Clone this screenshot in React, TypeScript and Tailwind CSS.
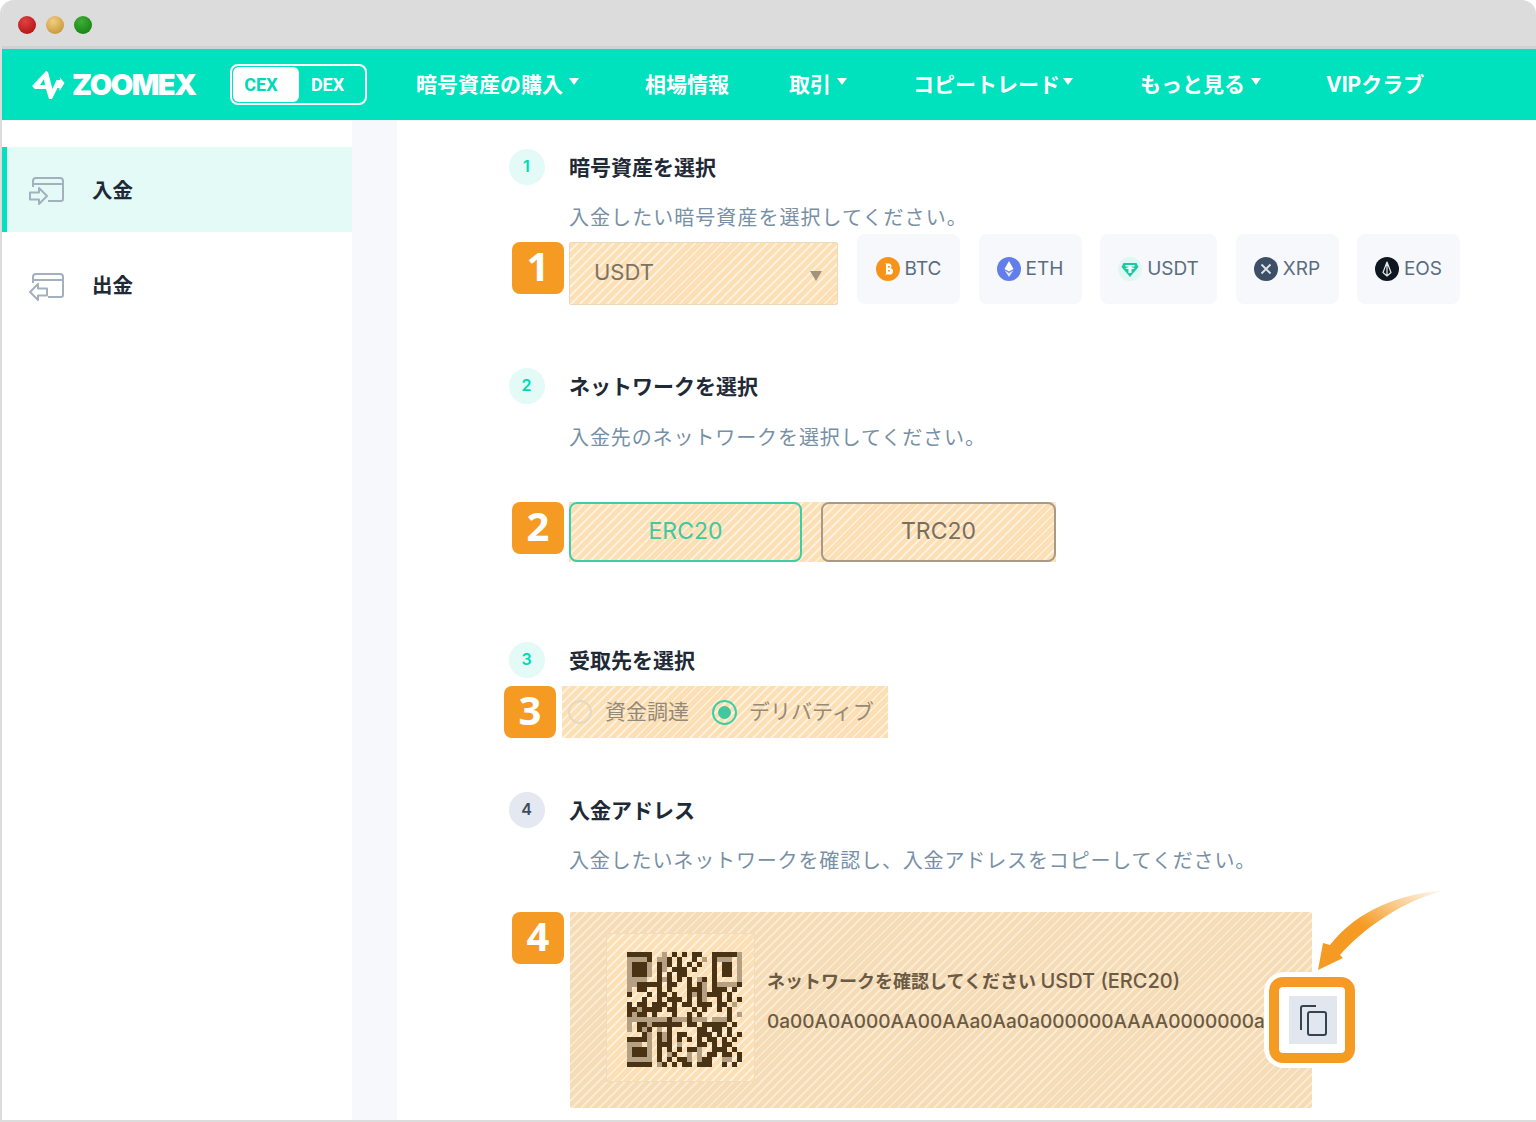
const jp = "font-['Inter','Noto_Sans_CJK_JP',sans-serif]";

const qrRows = [
  "#####..+.#.#.##..#####+",
  "++++#.++#.#..#.+.#+++.+",
  "+###+.#+#.#.#.#..#.##.+",
  "+###+.#+.###.#...#.##.+",
  "+###+.#.#.##.....#.##.+",
  "++++..#+#.#.#.+#.#....+",
  "++#####.##..#.#+.#++++#",
  "+.##..#.#...###+.###.#.",
  "#...#.##.#..#+#+###.#..",
  "...#..#.###.#.#+..#.#.#",
  "#.##.###.#.##.###.##.+.",
  "##+####.##...#.#..#.#..",
  "#+##.#...#..#.#.....#.+",
  "++++++++#+++#+++.+++#..",
  "+.##+######.##.#####.#.",
  "+.#+#.+.#.....##.##.#..",
  "...#+.#+#.##..###.#.#.#",
  "####+.#+#.#.#.#.##.#.#.",
  "+++.+.###.+...##.#.##..",
  "+###+.#.#.#.##+..###.#.",
  "+###+.#.+#..+.+.##.##.#",
  "+++++.#.#.##+.+##..++.#",
  "#####.+#.#.##.###..#.#.",
];

function Qr() {
  return (
    <svg width="115" height="115" viewBox="0 0 23 23" shapeRendering="crispEdges">
      {qrRows.map((row, y) =>
        row.split("").map((c, x) =>
          c === "." ? null : (
            <rect key={`${x}-${y}`} x={x} y={y} width="1" height="1" fill={c === "#" ? "#4a3215" : "#b5a083"} />
          )
        )
      )}
    </svg>
  );
}

function CardIcon({ out }: { out?: boolean }) {
  return (
    <svg width="36" height="30" viewBox="0 0 36 30" fill="none" stroke="#a3b1bf" strokeWidth="2">
      <path d="M4 11V5a3 3 0 0 1 3-3h24a3 3 0 0 1 3 3v18a2 2 0 0 1-2 2H19" />
      <path d="M4 8h30" />
      {out ? (
        <path d="M1 20 9 12v4.500h9v7H9V28Z" strokeLinejoin="round" />
      ) : (
        <path d="M18 20 10 12v4.500H1v7h9V28Z" strokeLinejoin="round" />
      )}
    </svg>
  );
}

function Caret({ className }: { className?: string }) {
  return <span className={`${className ?? "ml-[6px]"} mb-[6px] w-0 h-0 border-x-[5px] border-x-transparent border-t-[7px] border-t-white`} />;
}

function Step({ n, title, active = true }: { n: number; title: string; active?: boolean }) {
  return (
    <div className="flex items-center gap-[24px] h-[36px]">
      <div
        className={
          active
            ? "w-[36px] h-[36px] rounded-full bg-[#e3faf7] text-[#00d9b5] flex items-center justify-center pb-[2px] pr-[1px] text-[16px] font-semibold"
            : "w-[36px] h-[36px] rounded-full bg-[#e4e8f0] text-[#3d4d5f] flex items-center justify-center pb-[2px] pr-[1px] text-[16px] font-semibold"
        }
      >
        {n}
      </div>
      <div className="mt-[2px] text-[21px] font-bold text-[#1f2a37] leading-[36px]">{title}</div>
    </div>
  );
}

function Badge({ n }: { n: number }) {
  return (
    <div className="w-[52px] h-[52px] shrink-0 rounded-[8px] bg-[#f59b23] text-white flex items-center justify-center pb-[4px] text-[40px] font-bold font-['Open_Sans',sans-serif] leading-none">
      {n}
    </div>
  );
}

function Coin({ name }: { name: string }) {
  if (name === "BTC")
    return (
      <svg width="24" height="24" viewBox="0 0 24 24">
        <circle cx="12" cy="12" r="12" fill="#f7931a" />
        <path d="M9 6.500h4a2.500 2.500 0 0 1 1.200 4.700A2.800 2.800 0 0 1 13.500 17.500H9l1-1V7.500Z" fill="#fff" />
        <rect x="12" y="9" width="1.800" height="1.500" fill="#f7931a" />
        <rect x="12" y="13" width="1.800" height="1.500" fill="#f7931a" />
      </svg>
    );
  if (name === "ETH")
    return (
      <svg width="24" height="24" viewBox="0 0 24 24">
        <circle cx="12" cy="12" r="12" fill="#627eea" />
        <path d="M12 4 7.500 12 12 14.500 16.500 12Z" fill="#fff" />
        <path d="M7.500 13.300 12 20 16.500 13.300 12 16Z" fill="#dfe5fb" />
      </svg>
    );
  if (name === "USDT")
    return (
      <svg width="24" height="24" viewBox="0 0 24 24">
        <circle cx="12" cy="12" r="12" fill="#e0f7f2" />
        <path d="M5.500 6h13l2 4L12 20 3.500 10Z" fill="#1cc8a3" />
        <path d="M7.500 8h9v1.500h-3v1c1.500.1 3 .4 3 .8s-1.500.7-3 .8V16h-3v-3.900c-1.500-.1-3-.4-3-.8s1.500-.7 3-.8v-1h-3Z" fill="#fff" />
      </svg>
    );
  if (name === "XRP")
    return (
      <svg width="24" height="24" viewBox="0 0 24 24">
        <circle cx="12" cy="12" r="12" fill="#3d4f66" />
        <path d="M7.500 7.500 16.500 16.500M16.500 7.500 7.500 16.500" stroke="#dfe5ec" strokeWidth="1.800" fill="none" />
      </svg>
    );
  return (
    <svg width="24" height="24" viewBox="0 0 24 24">
      <circle cx="12" cy="12" r="12" fill="#0f1720" />
      <path d="M12 5 8 15.500 12 19l4-3.500ZM12 5v14" stroke="#e5e9ee" strokeWidth="1.200" fill="none" strokeLinejoin="round" />
    </svg>
  );
}

function Chip({ name, w }: { name: string; w: string }) {
  return (
    <div className={`${w} h-[70px] rounded-[8px] bg-[#f6f8fb] flex items-center justify-center gap-[5px] text-[19px] text-[#5a6d80]`}>
      <Coin name={name} />
      {name}
    </div>
  );
}

const hatch =
  "bg-[repeating-linear-gradient(135deg,#fddfb6_0px,#fddfb6_4.500px,#fff0dc_4.500px,#fff0dc_6.400px)]";
const hatchDim =
  "bg-[repeating-linear-gradient(135deg,#f5dcb6_0px,#f5dcb6_4.500px,#faead2_4.500px,#faead2_6.400px)]";

export default function App() {
  return (
    <div className={`w-[1536px] h-[1122px] bg-white overflow-hidden ${jp}`}>
      <div className="h-full rounded-t-[14px] border-l-2 border-b-2 border-[#dcdcdc] flex flex-col overflow-hidden">
        <div className="h-[49px] shrink-0 bg-[#dcdcdc] border-b-[3px] border-[#cdd2d2] flex items-center gap-[10px] pl-[18px] pt-[4px] -ml-[2px]">
          <div className="w-[18px] h-[18px] rounded-full bg-[radial-gradient(circle_at_40%_30%,#e04040,#a80c0c)]" />
          <div className="w-[18px] h-[18px] rounded-full bg-[radial-gradient(circle_at_40%_30%,#f3cd7f,#bd8b2a)]" />
          <div className="w-[18px] h-[18px] rounded-full bg-[radial-gradient(circle_at_40%_30%,#3fae35,#0d7a0d)]" />
        </div>

        <header className="h-[71px] shrink-0 bg-[#00e1be] flex items-center pl-[30px] text-white">
          <svg width="33" height="30" viewBox="0 0 33 30" fill="#fff" className="shrink-0">
            <path fillRule="evenodd" d="M0 16 14 1l2 1 4.500 17 4-9h4l-1-3 5 6-5 8v-3h-2L20 29h-3L14 19H3ZM8 15h5l-1-6Z" />
          </svg>
          <div className="ml-[7px] w-[124px] text-[29px] leading-none font-black font-['Inter',sans-serif] tracking-[-1.500px]">ZOOMEX</div>
          <div className="ml-[34px] w-[137px] h-[41px] rounded-[8px] border-2 border-white flex items-center p-[1px] font-['Roboto',sans-serif] font-bold text-[18px]">
            <div className="w-[66px] h-[35px] rounded-[6px] bg-white text-[#00d9b5] flex items-center justify-center pr-[10px]">CEX</div>
            <div className="flex-1 text-center pr-[8px]">DEX</div>
          </div>
          <nav className="ml-[49px] flex items-center text-[21px] font-bold whitespace-nowrap">
            <span>暗号資産の購入</span>
            <Caret />
            <span className="ml-[66px]">相場情報</span>
            <span className="ml-[60px]">取引</span>
            <Caret />
            <span className="ml-[66px]">コピートレード</span>
            <Caret className="ml-[3px]" />
            <span className="ml-[67px]">もっと見る</span>
            <Caret />
            <span className="ml-[65px]">VIPクラブ</span>
          </nav>
        </header>

        <div className="flex-1 flex min-h-0">
          <aside className="w-[350px] shrink-0 pt-[27px]">
            <div className="h-[85px] bg-[#e3faf7] border-l-[5px] border-[#00e1be] flex items-center pl-[22px] gap-[27px] pt-[3px] text-[20.500px] font-semibold text-[#1f2a37]">
              <CardIcon />
              入金
            </div>
            <div className="mt-[12px] h-[85px] flex items-center pl-[27px] gap-[27px] text-[20.500px] font-semibold text-[#1f2a37]">
              <CardIcon out />
              出金
            </div>
          </aside>
          <div className="w-[45px] shrink-0 bg-[#f6f8fc]" />

          <main className="flex-1 pl-[112px] pt-[29px] relative">
            <Step n={1} title="暗号資産を選択" />
            <p className="mt-[19px] ml-[60px] text-[20px] leading-[28px] tracking-[1.050px] text-[#7790a5]">入金したい暗号資産を選択してください。</p>
            <div className="mt-[2px] ml-[3px] flex items-start">
              <div className="mt-[8px]"><Badge n={1} /></div>
              <div className={`mt-[8px] ml-[5px] w-[269px] h-[63px] border border-[#ecd9bb] rounded-[2px] ${hatch} flex items-center justify-between pl-[24px] pr-[15px] pb-[2px] text-[22px] text-[#7c7462]`}>
                USDT
                <span className="w-0 h-0 border-x-[6px] border-x-transparent border-t-[10px] border-t-[#a2947c] mt-[6px]" />
              </div>
              <div className="ml-[19px] flex gap-[18.500px]">
                <Chip name="BTC" w="w-[103px]" />
                <Chip name="ETH" w="w-[103px]" />
                <Chip name="USDT" w="w-[117px]" />
                <Chip name="XRP" w="w-[103px]" />
                <Chip name="EOS" w="w-[103px]" />
              </div>
            </div>

            <div className="mt-[63px]"><Step n={2} title="ネットワークを選択" /></div>
            <p className="mt-[20px] ml-[60px] text-[20px] leading-[28px] tracking-[0.900px] text-[#7790a5]">入金先のネットワークを選択してください。</p>
            <div className="mt-[50px] ml-[3px] flex items-start">
              <Badge n={2} />
              <div className={`ml-[5px] w-[487px] h-[60px] flex justify-between ${hatch} text-[23px]`}>
                <div className="w-[233px] rounded-[8px] border-2 border-[#3ccfa6] text-[#43c79f] flex items-center justify-center pb-[2px]">ERC20</div>
                <div className="w-[235px] rounded-[8px] border-2 border-[#a89a86] text-[#7a6f5e] flex items-center justify-center pb-[2px]">TRC20</div>
              </div>
            </div>

            <div className="mt-[80px]"><Step n={3} title="受取先を選択" /></div>
            <div className="mt-[8px] -ml-[5px] flex items-start">
              <Badge n={3} />
              <div className={`ml-[6px] w-[326px] h-[52px] ${hatch} flex items-center pl-[6px] text-[21px] text-[#948a78]`}>
                <span className="w-[24px] h-[24px] rounded-full border-2 border-[#e7d8bf]" />
                <span className="ml-[13px]">資金調達</span>
                <span className="ml-[23px] w-[25px] h-[25px] rounded-full border-2 border-[#3ccfa6] flex items-center justify-center">
                  <span className="w-[13px] h-[13px] rounded-full bg-[#43c79f]" />
                </span>
                <span className="ml-[12px]">デリバティブ</span>
              </div>
            </div>

            <div className="mt-[54px]"><Step n={4} title="入金アドレス" active={false} /></div>
            <p className="mt-[19px] ml-[60px] text-[20px] leading-[28px] tracking-[0.860px] text-[#7790a5]">入金したいネットワークを確認し、入金アドレスをコピーしてください。</p>
            <div className="mt-[37px] ml-[3px] flex items-start">
              <Badge n={4} />
              <div className={`ml-[6px] w-[742px] h-[196px] rounded-[2px] ${hatchDim} flex items-start pt-[21px] pl-[36px]`}>
                <div className={`w-[149px] h-[149px] shrink-0 border border-[#efdcbc] ${hatch} flex items-center justify-center pl-[8px] pt-[4px]`}>
                  <Qr />
                </div>
                <div className="ml-[12px] mt-[36px] whitespace-nowrap text-[#6b5a44]">
                  <div className="text-[18px] font-semibold leading-[24px]">
                    ネットワークを確認してください <span className="text-[20px] font-medium">USDT (ERC20)</span>
                  </div>
                  <div className="mt-[16px] text-[19px] font-medium leading-[24px] font-['Inter',sans-serif]">0a00A0A000AA00AAa0Aa0a000000AAAA0000000a</div>
                </div>
              </div>
            </div>

            {/* copy button sits on top of the hatched box */}
            <div className="absolute left-[867px] top-[852px] w-[96px] h-[96px] rounded-[20px] bg-white p-[5px]">
              <div className="w-full h-full rounded-[14px] border-[10px] border-[#f59b23] bg-white flex items-center justify-center">
                <div className="ml-[2px] w-[48px] h-[48px] bg-[#e2e6ef] flex items-center justify-center">
                  <svg width="28" height="32" viewBox="0 0 28 32" fill="none" stroke="#36424f" strokeWidth="2">
                    <rect x="9" y="8" width="18" height="23" rx="2" />
                    <path d="M17 2H4a2 2 0 0 0-2 2v22" />
                  </svg>
                </div>
              </div>
            </div>

            <svg className="absolute left-[915px] top-[765px]" width="140" height="90" viewBox="0 0 140 90">
              <defs>
                <linearGradient id="arrowFade" x1="0" y1="1" x2="1" y2="0">
                  <stop offset="0.450" stopColor="#f59b23" />
                  <stop offset="1" stopColor="#f59b23" stopOpacity="0" />
                </linearGradient>
              </defs>
              <path d="M135 5C90 8 45 25 18 60L11 58 6 85 31 73 28 70C50 45 90 15 135 5Z" fill="url(#arrowFade)" />
            </svg>
          </main>
        </div>
      </div>
    </div>
  );
}
